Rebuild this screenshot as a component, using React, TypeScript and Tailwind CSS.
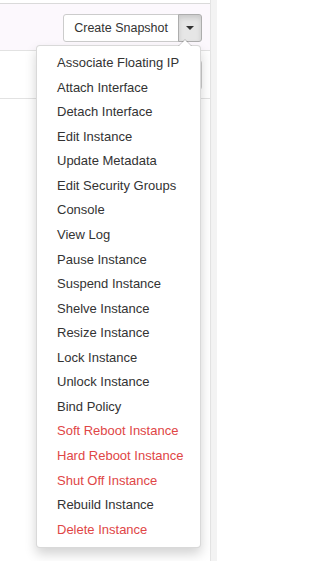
const actions: { label: string; danger?: boolean }[] = [
  { label: "Associate Floating IP" },
  { label: "Attach Interface" },
  { label: "Detach Interface" },
  { label: "Edit Instance" },
  { label: "Update Metadata" },
  { label: "Edit Security Groups" },
  { label: "Console" },
  { label: "View Log" },
  { label: "Pause Instance" },
  { label: "Suspend Instance" },
  { label: "Shelve Instance" },
  { label: "Resize Instance" },
  { label: "Lock Instance" },
  { label: "Unlock Instance" },
  { label: "Bind Policy" },
  { label: "Soft Reboot Instance", danger: true },
  { label: "Hard Reboot Instance", danger: true },
  { label: "Shut Off Instance", danger: true },
  { label: "Rebuild Instance" },
  { label: "Delete Instance", danger: true },
];

function ActionsMenu() {
  return (
    <div className="absolute right-[1px] top-full z-10 mt-[3px] w-[165px] rounded-[4px] border border-[rgba(0,0,0,0.15)] bg-white py-[5px] shadow-[0_6px_12px_rgba(0,0,0,0.175)]">
      {/* little arrow pointing at the toggle */}
      <div className="absolute -top-[7px] right-[8px] h-0 w-0 border-x-[7px] border-b-[7px] border-x-transparent border-b-[rgba(0,0,0,0.18)]" />
      <div className="absolute -top-[6px] right-[9px] h-0 w-0 border-x-[6px] border-b-[6px] border-x-transparent border-b-white" />
      <ul>
        {actions.map((a) => (
          <li key={a.label}>
            <a
              className={
                "block whitespace-nowrap px-[20px] py-[3px] text-[13px] leading-[1.42857] " +
                (a.danger ? "text-[#e04646]" : "text-[#333]")
              }
            >
              {a.label}
            </a>
          </li>
        ))}
      </ul>
    </div>
  );
}

export default function App() {
  return (
    <div className="flex h-[561px] w-[217px] overflow-hidden bg-white font-['Liberation_Sans',Arial,sans-serif]">
      {/* Main column */}
      <div className="flex w-[210px] flex-col">
        <div className="h-[3px] bg-white" />
        <div className="h-px bg-[#dadada]" />

        {/* Header with split button */}
        <div className="flex h-[46px] justify-end bg-[#fcf8fd] pr-[8px] pt-[10px]">
          <div className="relative flex h-[28px]">
            <button className="rounded-l-[3px] border border-[#ccc] bg-white px-[10px] text-[12.5px] leading-none text-[#333]">
              Create Snapshot
            </button>
            <button className="-ml-px flex w-[24px] items-center justify-center rounded-r-[3px] border border-[#adadad] bg-[#e6e6e6] shadow-[inset_0_3px_5px_rgba(0,0,0,0.125)]">
              <span className="h-0 w-0 border-x-[4px] border-t-[4px] border-x-transparent border-t-[#333]" />
            </button>
            <ActionsMenu />
          </div>
        </div>
        <div className="h-px bg-[#e2e2e2]" />

        {/* Filter row behind the menu */}
        <div className="flex h-[47px] items-center justify-end pr-[8px]">
          <div className="h-[30px] w-[150px] rounded-[3px] border border-[#ccc] bg-white" />
        </div>
        <div className="h-px bg-[#e2e2e2]" />
        <div className="flex-1 bg-white" />
      </div>

      {/* Scrollbar strip */}
      <div className="w-[7px] border-l border-[#e4e4e4] bg-[#f3f3f3]" />
    </div>
  );
}
